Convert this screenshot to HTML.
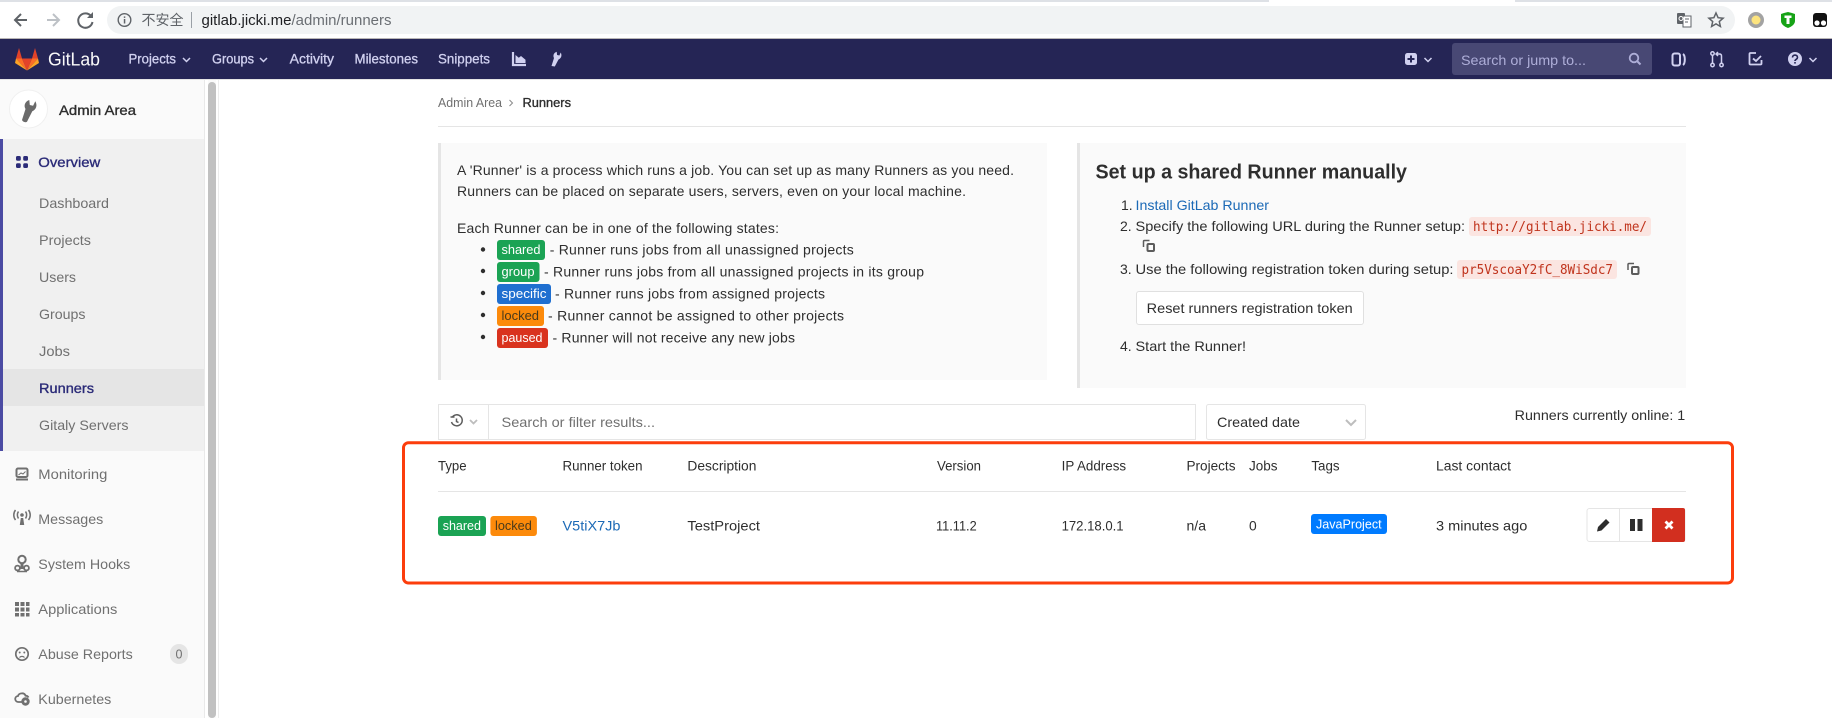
<!DOCTYPE html>
<html lang="zh"><head><meta charset="utf-8"><title>Runners · Admin Area · GitLab</title>
<style>
html,body{margin:0;padding:0;background:#fff;width:1832px;height:718px;overflow:hidden}
svg{display:block;font-family:"Liberation Sans","Noto Sans CJK SC",sans-serif}
text{font-size:14px;fill:#2e2e2e}
.n text{fill:#d1d1f0;stroke:#d1d1f0;stroke-width:.3px;font-size:13.5px}
.s text{fill:#707070}
.m{font-family:"DejaVu Sans Mono","Liberation Mono",monospace;font-size:13px;fill:#c0341d}
.b{font-size:12.5px;fill:#fff}
.h{font-size:13.5px}
.a{fill:#2b2b78;stroke:#2b2b78;stroke-width:.35px}
.d{stroke:#2e2e2e;stroke-width:.35px}
</style></head><body>
<svg width="1832" height="718" viewBox="0 0 1832 718" xmlns="http://www.w3.org/2000/svg">
<!-- browser chrome -->
<rect width="1832" height="39" fill="#fff"/>
<rect width="1269" height="2" fill="#dee1e6"/><rect x="1515" width="317" height="2" fill="#dee1e6"/>
<rect x="107" y="6" width="1628" height="28" rx="14" fill="#f1f3f4"/>
<rect y="38" width="1832" height="1" fill="#b9b6b6"/>
<g fill="none" stroke-width="2">
<path d="M27 20H15M21 14l-6 6 6 6" stroke="#5f6368"/>
<path d="M47 20h12M53 14l6 6-6 6" stroke="#bdc1c6"/>
<path d="M91 16a7.2 7.2 0 1 0 1.5 6" stroke="#5f6368"/>
</g><path d="M93 12v6h-6z" fill="#5f6368"/>
<circle cx="124.500" cy="20" r="6.300" fill="none" stroke="#5f6368" stroke-width="1.400"/><rect x="123.800" y="19" width="1.500" height="4.500" fill="#5f6368"/><rect x="123.800" y="16.400" width="1.500" height="1.500" fill="#5f6368"/>
<text x="141.500" y="25" textLength="42" lengthAdjust="spacingAndGlyphs" style="font-size:14px;fill:#5f6368">不安全</text>
<rect x="191" y="12" width="1" height="16" fill="#9aa0a6"/>
<text x="201.500" y="25" textLength="190" lengthAdjust="spacingAndGlyphs" style="font-size:14.500px;fill:#202124">gitlab.jicki.me<tspan style="fill:#6b6f74">/admin/runners</tspan></text>
<!-- right chrome icons -->
<rect x="1677" y="13" width="8" height="11" rx="1" fill="#5f6368"/><rect x="1683" y="16" width="8" height="11" fill="#fff" stroke="#5f6368" stroke-width="1"/><path d="M1685 19h4M1685 22h3" stroke="#5f6368"/><circle cx="1681" cy="18.500" r="2" fill="none" stroke="#fff"/>
<path d="M1716 13l2.100 4.700 5 .5-3.800 3.300 1.100 5-4.400-2.600-4.400 2.600 1.100-5-3.800-3.300 5-.5z" fill="none" stroke="#5f6368" stroke-width="1.500"/>
<circle cx="1756" cy="20" r="8" fill="#a3a3a3"/><circle cx="1756" cy="20" r="4.500" fill="#fde47e"/>
<path d="M1781 14l3-1 4-1 4 1 3 1v7c0 3-3 5.500-7 7-4-1.500-7-4-7-7z" fill="#17a317"/><path d="M1784.500 15.500h7v2.500h-2v6h-3v-6h-2z" fill="#fff"/>
<rect x="1813" y="13" width="14" height="14" rx="3" fill="#111"/><circle cx="1817" cy="23" r="2.600" fill="#fff"/><circle cx="1823.500" cy="23" r="2.600" fill="#fff"/>
<!-- navbar -->
<rect y="39" width="1832" height="40" fill="#252555"/>
<rect y="79" width="1832" height="1" fill="#e5e5e5"/>
<polygon points="22,58.500 32,58.500 27,70.500" fill="#e24329"/>
<polygon points="16,58.500 22,58.500 27,70.500" fill="#fc6d26"/><polygon points="38,58.500 32,58.500 27,70.500" fill="#fc6d26"/>
<polygon points="16,58.500 27,70.500 15,63" fill="#fca326"/><polygon points="38,58.500 27,70.500 39,63" fill="#fca326"/>
<polygon points="16,58.500 22,58.500 19,48" fill="#e24329"/><polygon points="38,58.500 32,58.500 35,48" fill="#e24329"/>
<text x="48" y="65.500" textLength="52" lengthAdjust="spacingAndGlyphs" style="font-size:18px;fill:#fafafa">GitLab</text>
<g class="n">
<text x="128.500" y="63.500" textLength="47.500" lengthAdjust="spacingAndGlyphs">Projects</text>
<text x="212" y="63.500" textLength="42" lengthAdjust="spacingAndGlyphs">Groups</text>
<text x="289.700" y="63.500" textLength="44.300" lengthAdjust="spacingAndGlyphs">Activity</text>
<text x="354.500" y="63.500" textLength="63.500" lengthAdjust="spacingAndGlyphs">Milestones</text>
<text x="438" y="63.500" textLength="52" lengthAdjust="spacingAndGlyphs">Snippets</text>
</g>
<g fill="none" stroke="#d1d1f0" stroke-width="1.500">
<path d="M183 58l3.500 3.500 3.500-3.500M260 58l3.500 3.500 3.500-3.500M1424.500 58l3.500 3.500 3.500-3.500M1809.500 58l3.500 3.500 3.500-3.500"/>
</g>
<path d="M513 52v13h13" fill="none" stroke="#d1d1f0" stroke-width="2.200"/><path d="M515.500 63v-8l3.300 2.800 2.200-1.800 4.500 3.800v3.200z" fill="#d1d1f0"/>
<path d="M551.500 66l2.500-8c-1.300-2.600-.2-5.300 2.700-6.300l.4 3.300 2.300.5 1.300-3c1.500 2.800.7 5.800-2.200 7l-3.700 7z" fill="#d1d1f0"/>
<rect x="1405" y="53" width="12" height="12" rx="2.500" fill="#d1d1f0"/><path d="M1411 55.500v7M1407.500 59h7" stroke="#252555" stroke-width="2"/>
<rect x="1452" y="43" width="200" height="32" rx="3" fill="#484874"/>
<text x="1461" y="65" textLength="125" lengthAdjust="spacingAndGlyphs" style="font-size:14px;fill:#aeaed8">Search or jump to...</text>
<circle cx="1634" cy="58" r="4.300" fill="none" stroke="#aeaed8" stroke-width="1.800"/><path d="M1637 61l3.500 3.500" stroke="#aeaed8" stroke-width="2"/>
<rect x="1672.500" y="53.500" width="7.500" height="12" rx="2" fill="none" stroke="#d1d1f0" stroke-width="2"/><path d="M1683 54c1.500 1 1.800 3 1.800 5.500s-.3 4.500-1.800 5.500" fill="none" stroke="#d1d1f0" stroke-width="2"/>
<g fill="none" stroke="#d1d1f0" stroke-width="1.500"><circle cx="1712.500" cy="53.500" r="1.700"/><circle cx="1712.500" cy="65" r="1.700"/><circle cx="1721.500" cy="65" r="1.700"/><path d="M1712.500 55.500v7.500M1721.500 63v-7c0-1.500-.8-2-2-2h-2.500M1718 52l-2 2 2 2"/></g>
<path d="M1756 53h-5.500c-.8 0-1 .5-1 1v9.500c0 .8.500 1 1 1h10c.8 0 1-.5 1-1V60" fill="none" stroke="#d1d1f0" stroke-width="1.800"/><path d="M1753 58.500l3 2.500 5-5" fill="none" stroke="#d1d1f0" stroke-width="1.800"/>
<circle cx="1795" cy="59" r="7" fill="#d1d1f0"/><path d="M1792.500 57.500c0-3.300 5-3.300 5 0 0 1.800-2.500 1.800-2.500 3.500" fill="none" stroke="#252555" stroke-width="1.600"/><rect x="1794.200" y="62" width="1.600" height="1.600" fill="#252555"/>
<!-- sidebar -->
<rect y="80" width="204" height="638" fill="#fafafa"/>
<rect x="204" y="80" width="1" height="638" fill="#e9e9e9"/>
<rect x="208" y="80" width="8" height="638" fill="#fafafa"/>
<rect x="208" y="82" width="8" height="636" rx="4" fill="#c1c1c1"/>
<rect x="218" y="80" width="1" height="638" fill="#ececec"/>
<circle cx="28.500" cy="109" r="19" fill="#fff" stroke="#f0f0f0"/>
<path d="M22 120l3.500-11c-2-3.500-.5-7.500 3.800-9l.5 5 3.300.8 2.200-4.600c2.300 4 1 8.200-3 10l-5.300 10.500c-1.500 1-4 .5-5-1.700z" fill="#6a6a6a"/>
<text class="d" x="59" y="115" textLength="77" lengthAdjust="spacingAndGlyphs">Admin Area</text>
<rect y="139" width="204" height="312" fill="#f0f0f0"/>
<rect y="369" width="204" height="37" fill="#e5e5e5"/>
<rect y="139" width="3" height="312" fill="#4b4ba3"/>
<g fill="#2b2b78"><rect x="16" y="156" width="4.800" height="4.800" rx="1.500"/><rect x="23.200" y="156" width="4.800" height="4.800" rx="1.500"/><rect x="16" y="163.200" width="4.800" height="4.800" rx="1.500"/><rect x="23.200" y="163.200" width="4.800" height="4.800" rx="1.500"/></g>
<text class="a" x="38.300" y="167" textLength="62" lengthAdjust="spacingAndGlyphs">Overview</text>
<g class="s">
<text x="39" y="208" textLength="70" lengthAdjust="spacingAndGlyphs">Dashboard</text>
<text x="39" y="245" textLength="52" lengthAdjust="spacingAndGlyphs">Projects</text>
<text x="39" y="282" textLength="37" lengthAdjust="spacingAndGlyphs">Users</text>
<text x="39" y="319" textLength="46.500" lengthAdjust="spacingAndGlyphs">Groups</text>
<text x="39" y="356" textLength="31" lengthAdjust="spacingAndGlyphs">Jobs</text>
<text class="a" x="39" y="393" textLength="55" lengthAdjust="spacingAndGlyphs" style="fill:#2b2b78">Runners</text>
<text x="39" y="430" textLength="89.500" lengthAdjust="spacingAndGlyphs">Gitaly Servers</text>
<text x="38.300" y="479" textLength="69" lengthAdjust="spacingAndGlyphs">Monitoring</text>
<text x="38.300" y="524" textLength="65" lengthAdjust="spacingAndGlyphs">Messages</text>
<text x="38.300" y="569" textLength="92" lengthAdjust="spacingAndGlyphs">System Hooks</text>
<text x="38.300" y="614" textLength="79" lengthAdjust="spacingAndGlyphs">Applications</text>
<text x="38.300" y="659" textLength="94.500" lengthAdjust="spacingAndGlyphs">Abuse Reports</text>
<text x="38.300" y="704" textLength="73" lengthAdjust="spacingAndGlyphs">Kubernetes</text>
</g>
<!-- sidebar icons -->
<g fill="#707070">
<rect x="16.500" y="468.500" width="11" height="8.500" rx="1.500" fill="none" stroke="#707070" stroke-width="2"/><rect x="16" y="478.500" width="12" height="2"/><path d="M18.500 475l2.500-2 2 1 2.500-2.500" stroke="#707070" fill="none"/>
<circle cx="22" cy="515" r="1.800"/><path d="M20.800 518h2.400l1 7h-4.400z"/>
<g fill="none" stroke="#707070" stroke-width="1.500"><path d="M18.500 511.500c-1.500 2-1.500 5 0 7M25.500 511.500c1.500 2 1.500 5 0 7M15.500 510c-2.300 3-2.300 7 0 10M28.500 510c2.300 3 2.300 7 0 10"/></g>
<circle cx="22" cy="559.500" r="3.700" fill="none" stroke="#707070" stroke-width="2"/><rect x="20.500" y="563" width="3" height="6"/><circle cx="17.500" cy="568" r="2.400" fill="none" stroke="#707070" stroke-width="1.800"/><circle cx="26.500" cy="568" r="2.400" fill="none" stroke="#707070" stroke-width="1.800"/><path d="M17 571.500h10" stroke="#707070" stroke-width="1.500"/>
<g><rect x="15" y="602" width="4" height="4"/><rect x="20.500" y="602" width="4" height="4"/><rect x="26" y="602" width="3.500" height="4"/><rect x="15" y="607.500" width="4" height="4"/><rect x="20.500" y="607.500" width="4" height="4"/><rect x="26" y="607.500" width="3.500" height="4"/><rect x="15" y="613" width="4" height="3.500"/><rect x="20.500" y="613" width="4" height="3.500"/><rect x="26" y="613" width="3.500" height="3.500"/></g>
<circle cx="22" cy="654" r="6.200" fill="none" stroke="#707070" stroke-width="1.700"/><circle cx="19.700" cy="652.500" r="1"/><circle cx="24.300" cy="652.500" r="1"/><path d="M19.500 657.500c1.200-1.500 3.800-1.500 5 0" fill="none" stroke="#707070" stroke-width="1.200"/>
<path d="M25 702h-6.500c-4 0-4.500-5.500-.5-6 1-3.500 6.500-3.500 7.500-.3 1.500 0 2.500.6 3 1.800" fill="none" stroke="#707070" stroke-width="1.800"/><circle cx="25.500" cy="701.500" r="4.200"/><circle cx="25.500" cy="701.500" r="1.300" fill="#fafafa"/>
</g>
<rect x="170" y="644" width="18" height="20" rx="9" fill="#e5e5e5"/><text x="175.500" y="658.500" style="font-size:12.500px;fill:#707070">0</text>
<!-- breadcrumb -->
<text x="438" y="107" textLength="64" lengthAdjust="spacingAndGlyphs" style="font-size:12.500px;fill:#707070">Admin Area</text>
<path d="M509.500 100l3 3-3 3" fill="none" stroke="#8a8a8a"/>
<text class="d" x="522.500" y="107" textLength="48.500" lengthAdjust="spacingAndGlyphs" style="font-size:12.500px">Runners</text>
<rect x="438" y="126" width="1248" height="1" fill="#e5e5e5"/>
<!-- left info box -->
<rect x="438" y="143" width="609" height="237" fill="#fafafa"/><rect x="438" y="143" width="3" height="237" fill="#e5e5e5"/>
<text x="457" y="175" textLength="557">A 'Runner' is a process which runs a job. You can set up as many Runners as you need.</text>
<text x="457" y="196" textLength="509">Runners can be placed on separate users, servers, even on your local machine.</text>
<text x="457" y="233" textLength="322">Each Runner can be in one of the following states:</text>
<g fill="#2e2e2e"><circle cx="483" cy="249.500" r="2.200"/><circle cx="483" cy="271" r="2.200"/><circle cx="483" cy="293" r="2.200"/><circle cx="483" cy="315" r="2.200"/><circle cx="483" cy="337" r="2.200"/></g>
<rect x="497" y="240" width="48" height="20" rx="3" fill="#1ba354"/>
<text class="b" x="501.500" y="254" textLength="39" lengthAdjust="spacingAndGlyphs">shared</text>
<text x="549.700" y="254.500" textLength="304">- Runner runs jobs from all unassigned projects</text>
<rect x="497" y="262" width="42.500" height="20" rx="3" fill="#1ba354"/>
<text class="b" x="501.500" y="276" textLength="33" lengthAdjust="spacingAndGlyphs">group</text>
<text x="544" y="276.500" textLength="380">- Runner runs jobs from all unassigned projects in its group</text>
<rect x="497" y="284" width="54" height="20" rx="3" fill="#1f6fd0"/>
<text class="b" x="501.500" y="298" textLength="45" lengthAdjust="spacingAndGlyphs">specific</text>
<text x="555" y="298.500" textLength="270">- Runner runs jobs from assigned projects</text>
<rect x="497" y="306" width="47" height="20" rx="3" fill="#fc8a0b"/>
<text class="b" x="501.500" y="320" textLength="37.500" lengthAdjust="spacingAndGlyphs" style="fill:#4a3a1a">locked</text>
<text x="548" y="320.500" textLength="296">- Runner cannot be assigned to other projects</text>
<rect x="497" y="328" width="51" height="20" rx="3" fill="#d9331e"/>
<text class="b" x="501.500" y="342" textLength="41" lengthAdjust="spacingAndGlyphs">paused</text>
<text x="552.500" y="342.500" textLength="242.500">- Runner will not receive any new jobs</text>
<!-- right info box -->
<rect x="1077" y="143" width="609" height="245" fill="#fafafa"/><rect x="1077" y="143" width="3" height="245" fill="#e5e5e5"/>
<text x="1095.500" y="178.500" textLength="311.500" lengthAdjust="spacingAndGlyphs" style="font-size:20px;font-weight:700">Set up a shared Runner manually</text>
<text x="1121" y="210">1.</text>
<text x="1135.500" y="210" textLength="133.500" lengthAdjust="spacingAndGlyphs" style="fill:#1b69b6">Install GitLab Runner</text>
<text x="1120" y="231">2.</text>
<text x="1135.500" y="231" textLength="329.500" lengthAdjust="spacingAndGlyphs">Specify the following URL during the Runner setup:</text>
<rect x="1469" y="217" width="182" height="19" rx="3" fill="#fbe5e1"/>
<text class="m" x="1473" y="231" textLength="174" lengthAdjust="spacingAndGlyphs">http://gitlab.jicki.me/</text>
<text x="1120" y="274">3.</text>
<text x="1135.500" y="274" textLength="318" lengthAdjust="spacingAndGlyphs">Use the following registration token during setup:</text>
<rect x="1457" y="260" width="160" height="19" rx="3" fill="#fbe5e1"/>
<text class="m" x="1461.500" y="274" textLength="151.500" lengthAdjust="spacingAndGlyphs">pr5VscoaY2fC_8WiSdc7</text>
<g fill="none" stroke="#5c5c5c" stroke-width="1.500">
<path d="M1143.500 247v-5.500c0-.6.400-1 1-1h5"/><rect x="1147.500" y="244" width="6.500" height="7" rx="1" stroke-width="2"/>
<path d="M1628 270v-5.500c0-.6.400-1 1-1h5"/><rect x="1632" y="267" width="6.500" height="7" rx="1" stroke-width="2"/>
</g>
<rect x="1136.500" y="291.500" width="227" height="33" rx="2.500" fill="#fff" stroke="#e0e0e0"/>
<text x="1146.700" y="313" textLength="206" lengthAdjust="spacingAndGlyphs">Reset runners registration token</text>
<text x="1120" y="351">4.</text>
<text x="1135.500" y="351" textLength="110.500" lengthAdjust="spacingAndGlyphs">Start the Runner!</text>
<!-- filter bar -->
<rect x="438.500" y="404.500" width="757" height="35" fill="#fff" stroke="#e5e5e5"/>
<rect x="488" y="405" width="1" height="34" fill="#e5e5e5"/>
<path d="M452 417.500a5.500 5.500 0 1 1-.5 4.500M450.500 417h4M456.500 418.500v3l2 1" fill="none" stroke="#5c5c5c" stroke-width="1.500"/>
<path d="M470 420l3.500 3.500 3.500-3.500" fill="none" stroke="#bdbdbd" stroke-width="1.800"/>
<text x="501.500" y="427" textLength="153.500" lengthAdjust="spacingAndGlyphs" style="fill:#707070">Search or filter results...</text>
<rect x="1206.500" y="404.500" width="159" height="35" rx="2" fill="#fff" stroke="#e5e5e5"/>
<text x="1217" y="427" textLength="83" lengthAdjust="spacingAndGlyphs">Created date</text>
<path d="M1346 420l5 5 5-5" fill="none" stroke="#bdbdbd" stroke-width="2"/>
<text x="1514.700" y="420" textLength="170.500" lengthAdjust="spacingAndGlyphs">Runners currently online: 1</text>
<!-- table -->
<text class="h" x="438" y="470.500" textLength="28.600" lengthAdjust="spacingAndGlyphs">Type</text>
<text class="h" x="562.500" y="470.500" textLength="80" lengthAdjust="spacingAndGlyphs">Runner token</text>
<text class="h" x="687.400" y="470.500" textLength="69" lengthAdjust="spacingAndGlyphs">Description</text>
<text class="h" x="937" y="470.500" textLength="44" lengthAdjust="spacingAndGlyphs">Version</text>
<text class="h" x="1061.600" y="470.500" textLength="64.500" lengthAdjust="spacingAndGlyphs">IP Address</text>
<text class="h" x="1186.500" y="470.500" textLength="49" lengthAdjust="spacingAndGlyphs">Projects</text>
<text class="h" x="1249" y="470.500" textLength="28.500" lengthAdjust="spacingAndGlyphs">Jobs</text>
<text class="h" x="1311.400" y="470.500" textLength="28.200" lengthAdjust="spacingAndGlyphs">Tags</text>
<text class="h" x="1436" y="470.500" textLength="75" lengthAdjust="spacingAndGlyphs">Last contact</text>
<rect x="438" y="491" width="1248" height="1" fill="#e5e5e5"/>
<rect x="438" y="516" width="48" height="20" rx="3" fill="#1ba354"/>
<text class="b" x="442.700" y="530" textLength="38.300" lengthAdjust="spacingAndGlyphs">shared</text>
<rect x="490.400" y="516" width="46.500" height="20" rx="3" fill="#fc8a0b"/>
<text class="b" x="495" y="530" textLength="36.800" lengthAdjust="spacingAndGlyphs" style="fill:#4a3a1a">locked</text>
<text x="562.500" y="530.500" textLength="58" lengthAdjust="spacingAndGlyphs" style="fill:#1b69b6">V5tiX7Jb</text>
<text x="687.400" y="530.500" textLength="72.600" lengthAdjust="spacingAndGlyphs">TestProject</text>
<text x="936" y="530.500" textLength="40.700" lengthAdjust="spacingAndGlyphs">11.11.2</text>
<text x="1061.600" y="530.500" textLength="62" lengthAdjust="spacingAndGlyphs">172.18.0.1</text>
<text x="1186.500" y="530.500" textLength="19.500" lengthAdjust="spacingAndGlyphs">n/a</text>
<text x="1249" y="530.500" textLength="7.700" lengthAdjust="spacingAndGlyphs">0</text>
<rect x="1311" y="514" width="76" height="20" rx="3" fill="#007bff"/>
<text class="b" x="1316" y="528.500" textLength="65.600" lengthAdjust="spacingAndGlyphs">JavaProject</text>
<text x="1436" y="530.500" textLength="91.300" lengthAdjust="spacingAndGlyphs">3 minutes ago</text>
<rect x="1587" y="508.500" width="98" height="33" rx="2.500" fill="#fff" stroke="#e5e5e5"/>
<rect x="1619" y="509" width="1" height="32" fill="#e5e5e5"/>
<path d="M1652 508h31a2 2 0 0 1 2 2v30a2 2 0 0 1-2 2h-31z" fill="#d22f1f"/>
<path d="M1597 531.500l1-4.500 8-8 3.500 3.500-8 8z" fill="#2e2e2e"/>
<rect x="1630" y="519" width="5" height="12" fill="#2e2e2e"/><rect x="1637.500" y="519" width="5" height="12" fill="#2e2e2e"/>
<path d="M1665.500 521.500l7 7M1672.500 521.500l-7 7" stroke="#fff" stroke-width="2.800"/>
<!-- red annotation -->
<rect x="403.500" y="442.700" width="1329" height="140.300" rx="5" fill="none" stroke="#fc3d0c" stroke-width="3"/>
</svg>
</body></html>
